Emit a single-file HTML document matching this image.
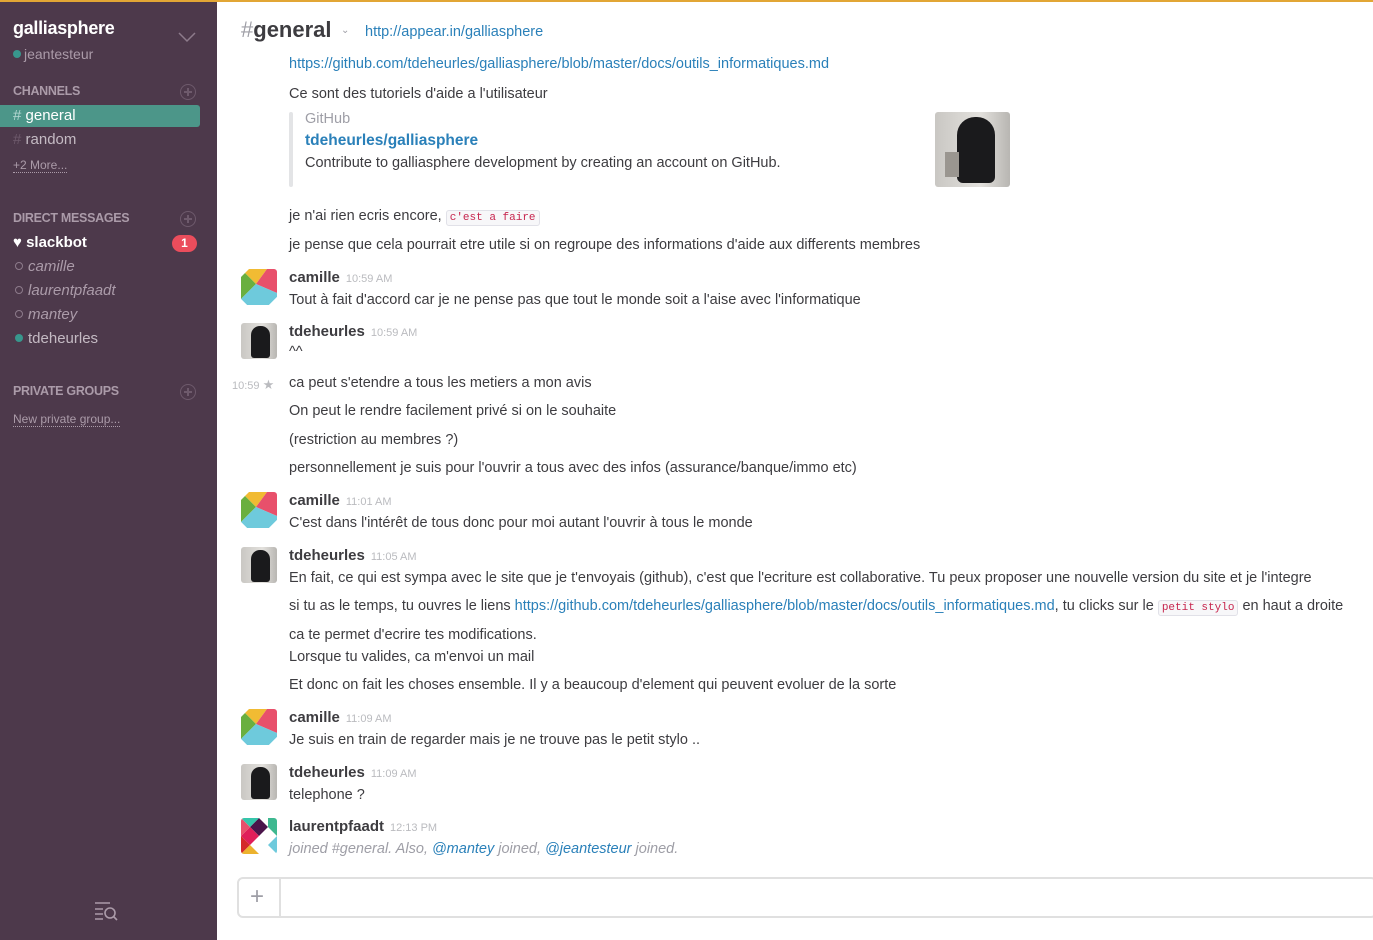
<!DOCTYPE html>
<html><head><meta charset="utf-8"><style>
*{margin:0;padding:0;box-sizing:border-box}
body{width:1373px;height:940px;overflow:hidden;background:#fff;font-family:"Liberation Sans",sans-serif;position:relative;color:#3d3c40}
.topbar{position:absolute;left:0;top:0;width:1373px;height:2px;background:#e2a635}
.side{position:absolute;left:0;top:2px;width:217px;height:938px;background:#4d394b}
.a{position:absolute;white-space:nowrap}
.sh{font-size:12.5px;font-weight:bold;color:#ab9ba9;letter-spacing:-0.3px}
.pl{position:absolute;width:16px;height:16px;border:1.5px solid #6e5a6c;border-radius:50%}
.pl:before,.pl:after{content:"";position:absolute;background:#6e5a6c}
.pl:before{left:6px;top:2.5px;width:1.5px;height:8px}
.pl:after{left:2.5px;top:6px;width:8px;height:1.5px}
.si{font-size:15px;color:#c4bac3}
.dot{display:inline-block;width:8px;height:8px;border-radius:50%;margin-right:5px;vertical-align:1px}
.t{font-size:14.5px;color:#3d3c40}
.n{font-size:15px;font-weight:bold;color:#3d3c40}
.ts{font-size:11px;color:#babbbf;font-weight:normal;margin-left:6px}
a,.lk{color:#2a80b9;text-decoration:none}
code{font-family:"Liberation Mono",monospace;font-size:11px;color:#c7254e;background:#f7f7f9;border:1px solid #e1e1e8;border-radius:3px;padding:1px 3px}
.av{position:absolute;width:36px;height:36px;border-radius:3px;overflow:hidden}
.tde{background:linear-gradient(90deg,#c9c7c3,#e3e1dd 60%,#b8b6b2)}
</style></head><body>
<div class="topbar"></div>
<div class="side">
<div class="a" style="left:13px;top:16px;font-size:18px;font-weight:bold;color:#fff;letter-spacing:-0.3px">galliasphere</div>
<svg class="a" style="left:178px;top:29px" width="18" height="12"><path d="M1 2 L9 10 L17 2" stroke="#8d7b8b" stroke-width="1.5" fill="none"/></svg>
<div class="a" style="left:13px;top:44px;font-size:14px;color:#ab9ba9"><span class="dot" style="background:#38978d;margin-right:3px"></span>jeantesteur</div>
<div class="a sh" style="left:13px;top:82px">CHANNELS</div>
<div class="pl" style="left:180px;top:82px"></div>
<div class="a" style="left:0;top:103px;width:200px;height:22px;background:#4c9689;border-radius:0 3px 3px 0"></div>
<div class="a" style="left:13px;top:105px;font-size:15px;color:#fff"><span style="color:#b5d8d2">#</span> general</div>
<div class="a si" style="left:13px;top:129px"><span style="color:#6e5a6c">#</span> random</div>
<div class="a" style="left:13px;top:156px;font-size:12px;color:#ab9ba9;border-bottom:1px dotted #ab9ba9">+2 More...</div>
<div class="a sh" style="left:13px;top:209px">DIRECT MESSAGES</div>
<div class="pl" style="left:180px;top:209px"></div>
<div class="a" style="left:13px;top:232px;font-size:15px;font-weight:bold;color:#fff">♥ slackbot</div>
<div class="a" style="left:172px;top:233px;width:25px;height:17px;border-radius:9px;background:#eb4d5c;color:#fff;font-size:12px;font-weight:bold;text-align:center;line-height:17px">1</div>
<div class="a si" style="left:15px;top:256px;font-style:italic;color:#ab9ba9"><span class="dot" style="border:1.5px solid #8d7b8b"></span>camille</div>
<div class="a si" style="left:15px;top:280px;font-style:italic;color:#ab9ba9"><span class="dot" style="border:1.5px solid #8d7b8b"></span>laurentpfaadt</div>
<div class="a si" style="left:15px;top:304px;font-style:italic;color:#ab9ba9"><span class="dot" style="border:1.5px solid #8d7b8b"></span>mantey</div>
<div class="a si" style="left:15px;top:328px"><span class="dot" style="background:#38978d"></span>tdeheurles</div>
<div class="a sh" style="left:13px;top:382px">PRIVATE GROUPS</div>
<div class="pl" style="left:180px;top:382px"></div>
<div class="a" style="left:13px;top:410px;font-size:12px;color:#ab9ba9;border-bottom:1px dotted #ab9ba9">New private group...</div>
<svg class="a" style="left:94px;top:899px" width="28" height="22"><g stroke="#ab9ba9" stroke-width="1.6" fill="none"><path d="M1 2H16M1 8H9M1 13H9M1 18H9"/><circle cx="16" cy="12" r="5"/><path d="M19.5 15.5L23 19"/></g></svg>
</div>

<div class="a" style="left:241px;top:17px;font-size:22px;font-weight:bold;color:#3d3c40"><span style="color:#9e9ea6;font-weight:normal">#</span>general</div>
<div class="a" style="left:341px;top:25px;font-size:10px;color:#9e9ea6">&#8964;</div>
<div class="a lk" style="left:365px;top:24px;font-size:14.5px">http://appear.in/galliasphere</div>

<div class="a t lk" style="left:289px;top:56px">https://github.com/tdeheurles/galliasphere/blob/master/docs/outils_informatiques.md</div>
<div class="a t" style="left:289px;top:86px">Ce sont des tutoriels d'aide a l'utilisateur</div>
<div class="a" style="left:289px;top:112px;width:4px;height:75px;background:#e3e4e6;border-radius:2px"></div>
<div class="a t" style="left:305px;top:111px;color:#9e9ea6">GitHub</div>
<div class="a" style="left:305px;top:132px;font-size:15.5px;font-weight:bold;color:#2a80b9">tdeheurles/galliasphere</div>
<div class="a t" style="left:305px;top:155px">Contribute to galliasphere development by creating an account on GitHub.</div>
<div class="av tde" style="left:935px;top:112px;width:75px;height:75px;border-radius:3px"><div style="position:absolute;left:22px;top:5px;width:38px;height:66px;background:#1a1a1c;border-radius:18px 18px 6px 6px"></div><div style="position:absolute;left:10px;top:40px;width:14px;height:25px;background:#9a9690"></div></div>

<div class="a t" style="left:289px;top:208px">je n'ai rien ecris encore, <code>c'est a faire</code></div>
<div class="a t" style="left:289px;top:237px">je pense que cela pourrait etre utile si on regroupe des informations d'aide aux differents membres</div>

<!-- camille -->
<svg class="av" style="left:241px;top:269px" width="36" height="36" viewBox="0 0 36 36"><rect width="36" height="36" fill="#fff"/><polygon points="8,0 26,0 15,15 4,4" fill="#f1bb33"/><polygon points="0,8 4,4 15,15 0,30" fill="#6aaf3f"/><polygon points="26,0 36,0 36,24 15,15" fill="#e8506b"/><polygon points="15,15 36,24 36,28 28,36 6,36 0,30" fill="#6ecadc"/><polygon points="0,30 0,36 6,36" fill="#fff"/><polygon points="36,28 36,36 28,36" fill="#fff"/></svg>
<div class="a n" style="left:289px;top:269px">camille<span class="ts">10:59 AM</span></div>
<div class="a t" style="left:289px;top:292px">Tout à fait d'accord car je ne pense pas que tout le monde soit a l'aise avec l'informatique</div>

<div class="av tde" style="left:241px;top:323px"><div style="position:absolute;left:10px;top:3px;width:19px;height:32px;background:#1a1a1c;border-radius:9px 9px 3px 3px"></div></div>
<div class="a n" style="left:289px;top:323px">tdeheurles<span class="ts">10:59 AM</span></div>
<div class="a t" style="left:289px;top:344px">^^</div>
<div class="a" style="left:232px;top:377px;font-size:11px;color:#babbbf">10:59 <span style="color:#babbbf;font-size:13px">★</span></div>
<div class="a t" style="left:289px;top:375px">ca peut s'etendre a tous les metiers a mon avis</div>
<div class="a t" style="left:289px;top:403px">On peut le rendre facilement privé si on le souhaite</div>
<div class="a t" style="left:289px;top:432px">(restriction au membres ?)</div>
<div class="a t" style="left:289px;top:460px">personnellement je suis pour l'ouvrir a tous avec des infos (assurance/banque/immo etc)</div>

<svg class="av" style="left:241px;top:492px" width="36" height="36" viewBox="0 0 36 36"><rect width="36" height="36" fill="#fff"/><polygon points="8,0 26,0 15,15 4,4" fill="#f1bb33"/><polygon points="0,8 4,4 15,15 0,30" fill="#6aaf3f"/><polygon points="26,0 36,0 36,24 15,15" fill="#e8506b"/><polygon points="15,15 36,24 36,28 28,36 6,36 0,30" fill="#6ecadc"/><polygon points="0,30 0,36 6,36" fill="#fff"/><polygon points="36,28 36,36 28,36" fill="#fff"/></svg>
<div class="a n" style="left:289px;top:492px">camille<span class="ts">11:01 AM</span></div>
<div class="a t" style="left:289px;top:515px">C'est dans l'intérêt de tous donc pour moi autant l'ouvrir à tous le monde</div>

<div class="av tde" style="left:241px;top:547px"><div style="position:absolute;left:10px;top:3px;width:19px;height:32px;background:#1a1a1c;border-radius:9px 9px 3px 3px"></div></div>
<div class="a n" style="left:289px;top:547px">tdeheurles<span class="ts">11:05 AM</span></div>
<div class="a t" style="left:289px;top:570px">En fait, ce qui est sympa avec le site que je t'envoyais (github), c'est que l'ecriture est collaborative. Tu peux proposer une nouvelle version du site et je l'integre</div>
<div class="a t" style="left:289px;top:598px">si tu as le temps, tu ouvres le liens <span class="lk">https://github.com/tdeheurles/galliasphere/blob/master/docs/outils_informatiques.md</span>, tu clicks sur le <code>petit stylo</code> en haut a droite</div>
<div class="a t" style="left:289px;top:627px">ca te permet d'ecrire tes modifications.</div>
<div class="a t" style="left:289px;top:649px">Lorsque tu valides, ca m'envoi un mail</div>
<div class="a t" style="left:289px;top:677px">Et donc on fait les choses ensemble. Il y a beaucoup  d'element qui peuvent evoluer de la sorte</div>

<svg class="av" style="left:241px;top:709px" width="36" height="36" viewBox="0 0 36 36"><rect width="36" height="36" fill="#fff"/><polygon points="8,0 26,0 15,15 4,4" fill="#f1bb33"/><polygon points="0,8 4,4 15,15 0,30" fill="#6aaf3f"/><polygon points="26,0 36,0 36,24 15,15" fill="#e8506b"/><polygon points="15,15 36,24 36,28 28,36 6,36 0,30" fill="#6ecadc"/><polygon points="0,30 0,36 6,36" fill="#fff"/><polygon points="36,28 36,36 28,36" fill="#fff"/></svg>
<div class="a n" style="left:289px;top:709px">camille<span class="ts">11:09 AM</span></div>
<div class="a t" style="left:289px;top:732px">Je suis en train de regarder mais je ne trouve pas le petit stylo ..</div>

<div class="av tde" style="left:241px;top:764px"><div style="position:absolute;left:10px;top:3px;width:19px;height:32px;background:#1a1a1c;border-radius:9px 9px 3px 3px"></div></div>
<div class="a n" style="left:289px;top:764px">tdeheurles<span class="ts">11:09 AM</span></div>
<div class="a t" style="left:289px;top:787px">telephone ?</div>

<svg class="av" style="left:241px;top:818px" width="36" height="36" viewBox="0 0 36 36"><rect width="36" height="36" fill="#fff"/><polygon points="18,0 27,9 18,18 9,9" fill="#4a154b"/><polygon points="9,-9 18,0 9,9 0,0" fill="#36c5ab"/><polygon points="27,-9 36,0 36,18 27,9" fill="#3eb890"/><polygon points="9,9 18,18 9,27 0,18" fill="#e01e5a"/><polygon points="0,18 9,27 0,36" fill="#d42a2a"/><polygon points="9,27 18,36 0,36" fill="#ecb22e"/><polygon points="27,27 36,18 36,36" fill="#6ecadc"/><polygon points="0,0 9,9 0,18" fill="#e8506b"/></svg>
<div class="a n" style="left:289px;top:818px">laurentpfaadt<span class="ts">12:13 PM</span></div>
<div class="a t" style="left:289px;top:841px;font-style:italic;color:#9e9ea6">joined #general. Also, <span class="lk">@mantey</span> joined, <span class="lk">@jeantesteur</span> joined.</div>

<div class="a" style="left:237px;top:877px;width:1140px;height:41px;border:2px solid #e0e0e0;border-radius:6px"></div>
<div class="a" style="left:279px;top:879px;width:2px;height:37px;background:#e0e0e0"></div>
<div class="a" style="left:250px;top:883px;font-size:24px;color:#9e9ea6">+</div>
</body></html>
